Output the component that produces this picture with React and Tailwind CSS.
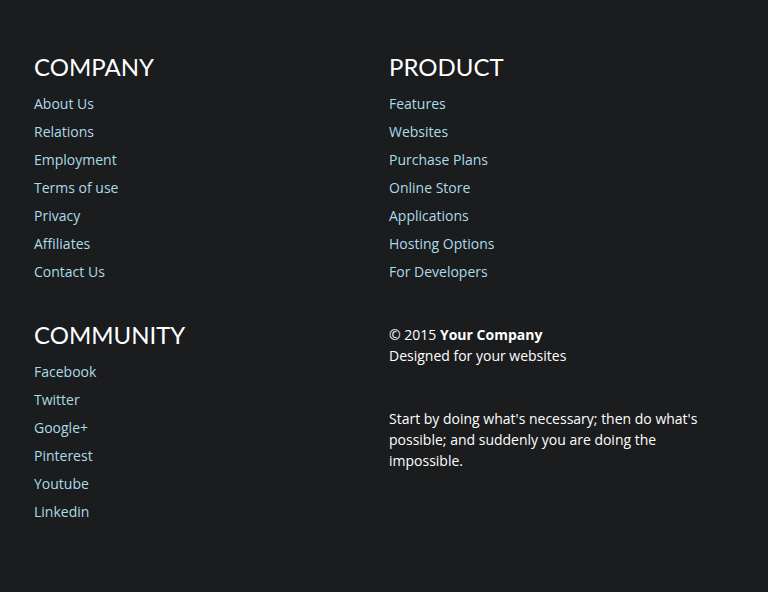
import React from 'react';

const company = ['About Us', 'Relations', 'Employment', 'Terms of use', 'Privacy', 'Affiliates', 'Contact Us'];
const product = ['Features', 'Websites', 'Purchase Plans', 'Online Store', 'Applications', 'Hosting Options', 'For Developers'];
const community = ['Facebook', 'Twitter', 'Google+', 'Pinterest', 'Youtube', 'Linkedin'];

function LinkGroup({ title, links }) {
  return (
    <div>
      <h3 className="text-[24px] leading-[30px] text-white uppercase font-['Lato',sans-serif] mb-[8px]">{title}</h3>
      <ul>
        {links.map((l) => (
          <li key={l} className="h-[28px] leading-[28px]">
            <a href="#" className="text-[#acdbe8] hover:text-white">{l}</a>
          </li>
        ))}
      </ul>
    </div>
  );
}

export default function App() {
  return (
    <footer className="min-h-screen bg-[#1a1c1e] font-['Open_Sans',sans-serif] text-[14px] text-white">
      <div className="px-[34px] pt-[52px] grid grid-cols-[355px_1fr] gap-y-[34px]">
        <LinkGroup title="Company" links={company} />
        <LinkGroup title="Product" links={product} />
        <LinkGroup title="Community" links={community} />
        <div className="leading-[21px] pt-[4px]">
          <p>© 2015 <strong className="font-bold">Your Company</strong></p>
          <p>Designed for your websites</p>
          <p className="mt-[42px] max-w-[320px]">
            Start by doing what's necessary; then do what's possible; and suddenly you are doing the impossible.
          </p>
        </div>
      </div>
    </footer>
  );
}
